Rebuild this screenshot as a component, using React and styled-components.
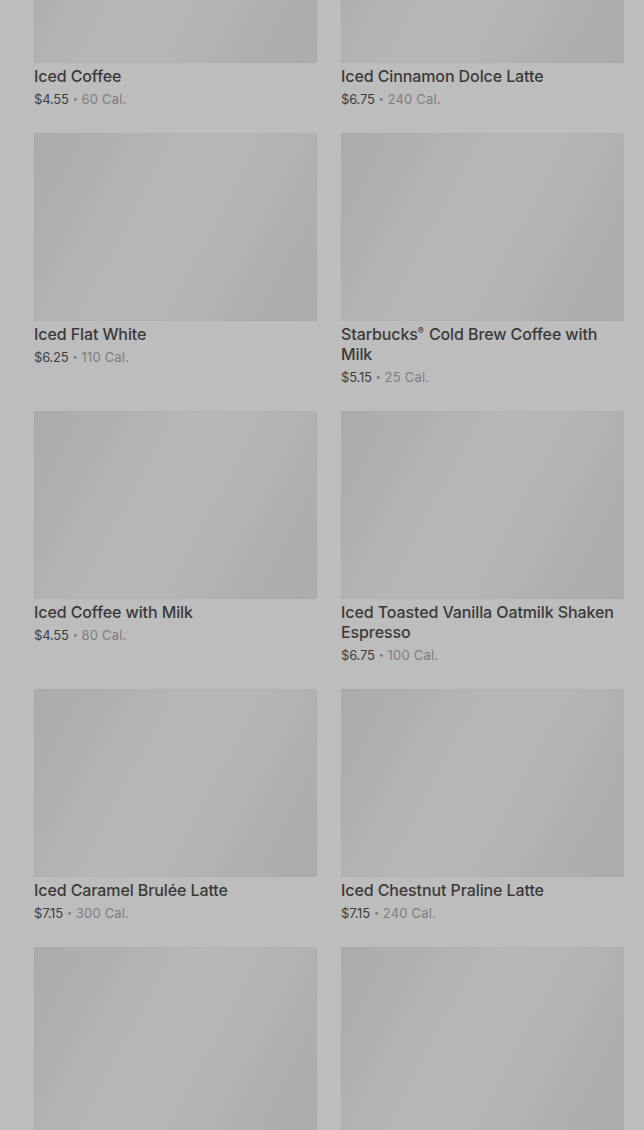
import React from 'react';
import styled, { createGlobalStyle } from 'styled-components';

// last two only show their image inside the viewport
const products = [
  { id: 1, name: 'Iced Coffee', price: '$4.55', cal: '60 Cal.' },
  { id: 2, name: 'Iced Cinnamon Dolce Latte', price: '$6.75', cal: '240 Cal.' },
  { id: 3, name: 'Iced Flat White', price: '$6.25', cal: '110 Cal.' },
  { id: 4, name: 'Starbucks® Cold Brew Coffee with Milk', price: '$5.15', cal: '25 Cal.' },
  { id: 5, name: 'Iced Coffee with Milk', price: '$4.55', cal: '80 Cal.' },
  { id: 6, name: 'Iced Toasted Vanilla Oatmilk Shaken Espresso', price: '$6.75', cal: '100 Cal.' },
  { id: 7, name: 'Iced Caramel Brulée Latte', price: '$7.15', cal: '300 Cal.' },
  { id: 8, name: 'Iced Chestnut Praline Latte', price: '$7.15', cal: '240 Cal.' },
  { id: 9 },
  { id: 10 },
];

const GlobalStyle = createGlobalStyle`
  html, body {
    margin: 0;
    padding: 0;
    background: #bdbdbd;
    height: 1130px;
    overflow: hidden;
  }
  body {
    font-family: Inter, "Noto Sans", "Liberation Sans", sans-serif;
    -webkit-font-smoothing: antialiased;
  }
`;

// renders the name with a small superscript for the ® mark
const renderName = (name) => {
  const parts = name.split('®');
  if (parts.length === 1) return name;
  return (
    <>
      {parts[0]}
      <Reg>®</Reg>
      {parts[1]}
    </>
  );
};

const App = () => {
  return (
    <>
      <GlobalStyle />
      <Page>
        <Grid>
          {products.map((p) => (
            <Card key={p.id}>
              <Thumb />
              {p.name && (
                <>
                  <Name>{renderName(p.name)}</Name>
                  <Meta>
                    <Price>{p.price}</Price>
                    <Dot>•</Dot>
                    <Cal>{p.cal}</Cal>
                  </Meta>
                </>
              )}
            </Card>
          ))}
        </Grid>
      </Page>
    </>
  );
};

const Page = styled.main`
  padding: 0 20px 0 34px;
  background: #bdbdbd;
`;

const Grid = styled.div`
  display: grid;
  grid-template-columns: 283px 283px;
  column-gap: 24px;
  row-gap: 24px;
  margin-top: -125px;
`;

const Card = styled.div`
  display: flex;
  flex-direction: column;
`;

const Thumb = styled.div`
  height: 188px;
  background: linear-gradient(
    118deg,
    #acacac 0%,
    #b0b0b0 20%,
    #b7b7b7 42%,
    #b6b6b6 58%,
    #afafaf 82%,
    #acacac 100%
  );
  box-shadow: inset 0 0 0 1px rgba(0, 0, 0, 0.012);
  margin-bottom: 3px;
`;

const Name = styled.div`
  font-size: 16px;
  line-height: 20px;
  font-weight: 500;
  color: #3a3a3a;
  letter-spacing: -0.1px;
`;

const Reg = styled.span`
  font-size: 9px;
  line-height: 0;
  position: relative;
  top: -6px;
  margin-right: 1px;
`;

const Meta = styled.div`
  margin-top: 3px;
  font-size: 13px;
  line-height: 20px;
  letter-spacing: -0.2px;
  display: flex;
  align-items: center;
  gap: 4px;
`;

const Price = styled.span`
  color: #3e3e3e;
`;

const Dot = styled.span`
  color: #7a7a7a;
  font-size: 9px;
`;

const Cal = styled.span`
  color: #7e7e7e;
  letter-spacing: 0.2px;
`;

export default App;
